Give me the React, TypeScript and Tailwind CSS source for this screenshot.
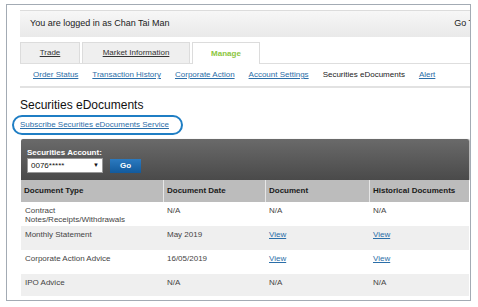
const font = { fontFamily: '"Liberation Sans", Arial, sans-serif' };

const subNav = [
  "Order Status",
  "Transaction History",
  "Corporate Action",
  "Account Settings",
  "Securities eDocuments",
  "Alert",
];

const rows = [
  { type: "Contract Notes/Receipts/Withdrawals", date: "N/A", doc: "N/A", hist: "N/A" },
  { type: "Monthly Statement", date: "May 2019", doc: "View", hist: "View" },
  { type: "Corporate Action Advice", date: "16/05/2019", doc: "View", hist: "View" },
  { type: "IPO Advice", date: "N/A", doc: "N/A", hist: "N/A" },
];

function Cell({ value }: { value: string }) {
  if (value === "View") {
    return <span className="text-[#2b6ea8] underline">View</span>;
  }
  return <span>{value}</span>;
}

export default function App() {
  return (
    <div className="w-[478px] h-[307px] bg-white overflow-hidden pt-[4px] pl-[6px]" style={font}>
      <div className="w-[465px] h-[297px] border border-[#a3abb4] overflow-hidden pl-[13px] pt-[5px]">
        {/* logged in bar */}
        <div className="w-[451px] h-[27px] border-t border-[#dcdcdc] bg-gradient-to-b from-[#f7f7f7] to-[#e9e9e9] flex items-center pl-[10px] text-[9px] text-[#222]">
          <span>You are logged in as Chan Tai Man</span>
          <span className="ml-auto mr-[-3px] whitespace-nowrap">Go T</span>
        </div>

        {/* tabs */}
        <div className="mt-[5px] flex items-end gap-[2px] border-b border-[#dedede] h-[22px]">
          <div className="w-[60px] h-[21px] bg-[#efefef] border border-[#dcdcdc] border-b-0 flex items-center justify-center text-[8px] text-[#333] underline">
            Trade
          </div>
          <div className="w-[108px] h-[21px] bg-[#efefef] border border-[#dcdcdc] border-b-0 flex items-center justify-center text-[8px] text-[#333] underline">
            Market Information
          </div>
          <div className="w-[68px] h-[22px] bg-white border border-[#dcdcdc] border-b-0 -mb-px flex items-center justify-center text-[8px] font-bold text-[#8cc63e]">
            Manage
          </div>
        </div>

        {/* sub nav */}
        <div className="h-[24px] flex items-center gap-[14px] pl-[13px] text-[8px] border-b-2 border-[#e2e2e2]">
          {subNav.map((s) =>
            s === "Securities eDocuments" ? (
              <span key={s} className="text-[#222]">{s}</span>
            ) : (
              <span key={s} className="text-[#2b6ea8] underline">{s}</span>
            )
          )}
        </div>

        <div className="mt-[10px] text-[12px] leading-[14px] text-[#111]">Securities eDocuments</div>

        <div className="mt-[3px] -ml-[8px] w-[171px] h-[20px] rounded-[10px] border-2 border-[#1f7ec4] flex items-center pl-[6px]">
          <span className="text-[8px] text-[#2b6ea8] underline">Subscribe Securities eDocuments Service</span>
        </div>

        {/* table area */}
        <div className="mt-[4px] ml-[1px] w-[448px]">
          <div className="h-[41px] bg-gradient-to-b from-[#6a6a6a] to-[#4a4a4a] rounded-t-[2px] px-[6px] pt-[9px] shadow-[1px_0_1px_rgba(0,0,0,0.3)]">
            <div className="text-[8px] font-bold text-white leading-[9px]">Securities Account:</div>
            <div className="flex items-center gap-[7px] mt-[1px]">
              <div className="w-[76px] h-[15px] bg-white border border-[#999] flex items-center justify-between px-[3px] text-[8px] text-[#111]">
                <span>0076*****</span>
                <span className="text-[6px]">▼</span>
              </div>
              <div className="w-[31px] h-[14px] bg-gradient-to-b from-[#2b7ac0] to-[#125a9c] flex items-center justify-center text-[8px] font-bold text-white">
                Go
              </div>
            </div>
          </div>

          <div className="grid grid-cols-[142px_102px_104px_100px] text-[8px]">
            {["Document Type", "Document Date", "Document", "Historical Documents"].map((h, i) => (
              <div
                key={h}
                className={
                  "h-[22px] bg-[#bcbcbc] flex items-center px-[3px] font-bold text-[#1a1a1a] " +
                  (i > 0 ? "border-l border-[#e6e6e6]" : "")
                }
              >
                {h}
              </div>
            ))}
            {rows.map((r, i) => {
              const bg = i % 2 === 0 ? "bg-white" : "bg-[#efefef]";
              const h = i === 3 ? "h-[22px]" : "h-[24px]";
              return [r.type, r.date, r.doc, r.hist].map((v, j) => (
                <div
                  key={`${i}-${j}`}
                  className={`${bg} ${h} px-[4px] pt-[4px] text-[#444] leading-[9px] ${
                    j === 0 && i === 0 ? "pr-[20px]" : ""
                  }`}
                >
                  <Cell value={v} />
                </div>
              ));
            })}
          </div>
        </div>
      </div>
    </div>
  );
}
